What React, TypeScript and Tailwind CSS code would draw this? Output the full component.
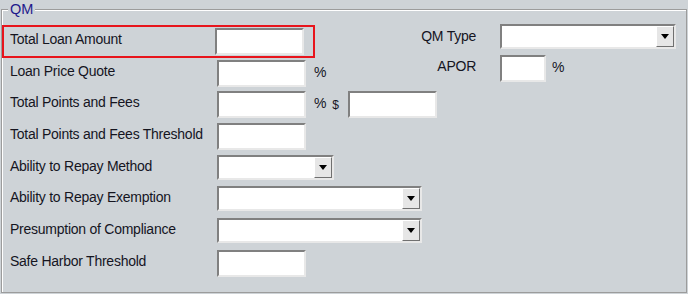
import React from "react";

const font = { fontFamily: '"Liberation Sans", Arial, sans-serif' };

function TextBox({ w = "w-[89px]" }: { w?: string }) {
  return (
    <div
      className={`${w} h-[27px] bg-white border-2 border-t-[#808080] border-l-[#808080] border-b-[#e8e8e8] border-r-[#e8e8e8] shrink-0`}
    />
  );
}

function Combo({ w }: { w: string }) {
  return (
    <div
      className={`${w} h-[25px] bg-white border-2 border-t-[#808080] border-l-[#808080] border-b-[#e8e8e8] border-r-[#e8e8e8] flex justify-end shrink-0`}
    >
      <div className="w-[18px] h-full bg-[#e6e6e6] border border-t-white border-l-white border-b-[#707070] border-r-[#707070] flex items-center justify-center">
        <svg width="8" height="5" viewBox="0 0 8 5">
          <path d="M0 0H8L4 5Z" fill="#000" />
        </svg>
      </div>
    </div>
  );
}

type Row = { label: string; field: React.ReactNode; after?: React.ReactNode; highlight?: boolean };

const rows: Row[] = [
  { label: "Total Loan Amount", field: <TextBox />, highlight: true },
  { label: "Loan Price Quote", field: <TextBox />, after: <span className="ml-[8px] mt-[4px]">%</span> },
  {
    label: "Total Points and Fees",
    field: <TextBox />,
    after: (
      <div className="flex items-start">
        <span className="ml-[8px] mt-[4px]">%</span>
        <span className="ml-[6px] mt-[4px] text-[12px] leading-[20px]">$</span>
        <div className="ml-[9px]">
          <TextBox />
        </div>
      </div>
    ),
  },
  { label: "Total Points and Fees Threshold", field: <TextBox /> },
  { label: "Ability to Repay Method", field: <Combo w="w-[117px]" /> },
  { label: "Ability to Repay Exemption", field: <Combo w="w-[205px]" /> },
  { label: "Presumption of Compliance", field: <Combo w="w-[205px]" /> },
  { label: "Safe Harbor Threshold", field: <TextBox /> },
];

export default function App() {
  return (
    <div
      className="w-[688px] h-[294px] bg-[#ced3d7] pl-[1px] pr-[1px] pt-[2px] text-[14px] leading-[16px] tracking-[-0.25px] text-[#15151f]"
      style={font}
    >
      <fieldset className="h-[291px] border border-[#9c9c9c] shadow-[inset_1px_1px_0_#fff] px-[8px] pt-[12px]">
        <legend className="-ml-[2px] px-[2px] text-[14.5px] leading-[14px] tracking-normal text-[#1e1a8c] bg-[#ced3d7]">QM</legend>
        <div className="flex">
          <div className="flex flex-col w-[410px]">
            {rows.map((r) => (
              <div key={r.label} className="flex items-start h-[31.7px]">
                <div
                  className={
                    r.highlight
                      ? "flex items-start -ml-[8px] pl-[8px] -mt-[3px] pt-[1px] h-[33px] w-[313px] border-2 border-[#e8141c] -mb-[2px]"
                      : "flex items-start"
                  }
                >
                  <div className={r.highlight ? "w-[205px] pt-[3px] -ml-[2px]" : "w-[207px] pt-[3px]"}>{r.label}</div>
                  {r.field}
                </div>
                {r.after}
              </div>
            ))}
          </div>
          <div className="flex flex-col -mt-[4px]">
            <div className="flex items-start h-[31px]">
              <div className="w-[56px] text-right pt-[4px]">QM Type</div>
              <div className="ml-[24px]">
                <Combo w="w-[176px]" />
              </div>
            </div>
            <div className="flex items-start">
              <div className="w-[56px] text-right pt-[3px]">APOR</div>
              <div className="ml-[24px]">
                <TextBox w="w-[46px]" />
              </div>
              <span className="ml-[6px] mt-[4px]">%</span>
            </div>
          </div>
        </div>
      </fieldset>
    </div>
  );
}
